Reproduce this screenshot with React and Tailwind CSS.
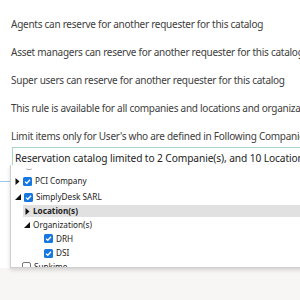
import React from "react";

const Check = ({ checked = true }) =>
	checked ? (
		<svg width="9" height="9" viewBox="0 0 9 9" className="shrink-0">
			<rect x="0" y="0" width="9" height="9" rx="1.5" fill="#1677e0" />
			<path d="M2 4.6 L3.8 6.3 L7 2.7" fill="none" stroke="#fff" strokeWidth="1.3" />
		</svg>
	) : (
		<svg width="9" height="9" viewBox="0 0 9 9" className="shrink-0">
			<rect x="0.5" y="0.5" width="8" height="8" rx="1.5" fill="#fff" stroke="#777" />
		</svg>
	);

const Closed = () => (
	<svg width="5" height="7" viewBox="0 0 5 7" className="shrink-0">
		<path d="M0.5 0 L4.5 3.5 L0.5 7 Z" fill="#111" />
	</svg>
);

const Open = () => (
	<svg width="6" height="6" viewBox="0 0 6 6" className="shrink-0">
		<path d="M6 0 L6 6 L0 6 Z" fill="#111" />
	</svg>
);

const rules = [
	"Agents can reserve for another requester for this catalog",
	"Asset managers can reserve for another requester for this catalog",
	"Super users can reserve for another requester for this catalog",
	"This rule is available for all companies and locations and organizations",
];

export default function App() {
	return (
		<div
			className="w-[300px] h-[300px] overflow-hidden relative bg-[#f7f6f4]"
			style={{ fontFamily: '"Noto Sans", "Open Sans", sans-serif' }}
		>
			<div className="bg-white h-[268px] pt-[16px] pl-[11px]">
				{rules.map((r) => (
					<div key={r} className="h-[28px] whitespace-nowrap text-[10px] tracking-[-0.26px] leading-[16px] text-[#404040]">
						{r}
					</div>
				))}
				<div className="h-[19px] whitespace-nowrap text-[10px] tracking-[-0.26px] leading-[16px] text-[#404040]">
					Limit items only for User's who are defined in Following Companies
				</div>
				<div className="ml-px border-t border-l border-[#a9d6c6] h-[18px] pl-[2px] pt-[2px] whitespace-nowrap text-[10.2px] tracking-[-0.1px] leading-[16px] text-[#222]">
					Reservation catalog limited to 2 Companie(s), and 10 Locations
				</div>
			</div>

			<div className="absolute left-0 top-[181px] w-[12px] h-px bg-[#9cc7ec]" />

			<div className="absolute left-[10px] top-[165px] w-[300px] h-[103px] bg-white border-l border-b border-[#cfcfcf] shadow-[0_2px_4px_rgba(0,0,0,0.15)] overflow-hidden text-[8.2px] leading-[12px] text-[#222]">
				<div className="ml-[15px] mt-[3px] w-[6px] h-[2px] border-b border-[#aaa] rounded-b-full" />
				<div className="flex items-center gap-[3px] pl-[4px] mt-[4px] h-[14px]">
					<Closed />
					<Check />
					<span>PCI Company</span>
				</div>
				<div className="flex items-center gap-[3px] pl-[4px] mt-[2px] h-[14px]">
					<Open />
					<Check />
					<span>SimplyDesk SARL</span>
				</div>
				<div className="flex items-center gap-[3px] ml-[12px] mt-px pl-[2px] h-[12px] bg-[#e1e1e1]">
					<Closed />
					<span className="font-bold">Location(s)</span>
				</div>
				<div className="flex items-center gap-[3px] pl-[13px] mt-[2px] h-[12px]">
					<Open />
					<span>Organization(s)</span>
				</div>
				<div className="flex items-center gap-[3px] pl-[33px] mt-px h-[13px]">
					<Check />
					<span>DRH</span>
				</div>
				<div className="flex items-center gap-[3px] pl-[33px] mt-px h-[14px]">
					<Check />
					<span>DSI</span>
				</div>
				<div className="flex items-center gap-[3px] pl-[11px] h-[13px]">
					<Check checked={false} />
					<span>Sunkime</span>
				</div>
			</div>
		</div>
	);
}
